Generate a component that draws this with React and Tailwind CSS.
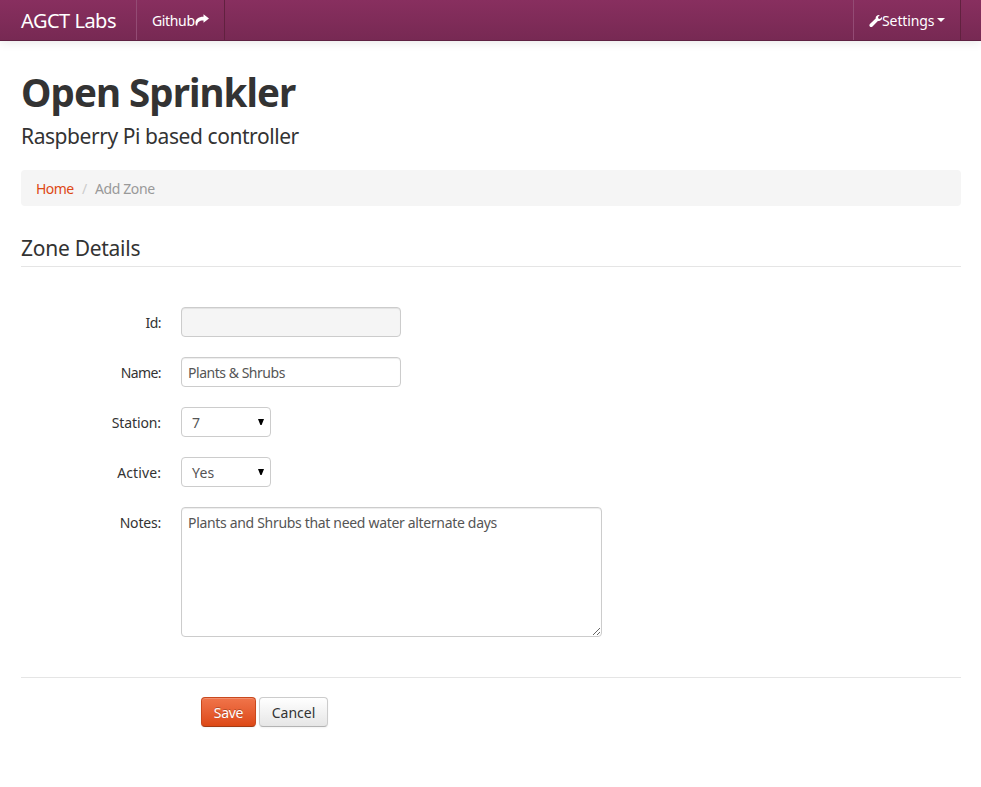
import React from "react";

const sans = "font-['Noto_Sans','Liberation_Sans',sans-serif]";
const field =
  "block rounded-[4px] border border-[#ccc] text-[14px] leading-[20px] text-[#555] outline-none";
const inset = "shadow-[inset_0_1px_1px_rgba(0,0,0,0.075)]";

function ShareIcon() {
  return (
    <svg width="14" height="14" viewBox="0 0 14 14" fill="#fff" className="mt-[2px] shrink-0">
      <path d="M8.5 1.2 L14 5.6 L8.5 9.8 V7.5 C4.8 7.3 2.4 8.6 2.2 12.6 H0.9 C-0.8 7.4 2.2 3.7 8.5 3.7 Z" />
    </svg>
  );
}

function WrenchIcon() {
  return (
    <svg width="14" height="14" viewBox="0 0 14 14" fill="#fff" className="mt-[3px] shrink-0">
      <path d="M12.9 3.1 L10.9 4.9 L9.3 4.5 L9 3 L10.9 1.1 C8.5 0.3 6.3 2.2 6.7 4.5 L0.9 9.9 C-0.7 11.8 1.6 14.1 3.5 12.5 L8.9 6.9 C11.3 7.4 13.7 5.5 12.9 3.1 Z" />
    </svg>
  );
}

function Row({ label, children, className = "mb-[20px]" }) {
  return (
    <div className={`flex items-start ${className}`}>
      <div className="w-[140px] pt-[6px] text-right leading-[20px]">{label}</div>
      <div className="ml-[20px]">{children}</div>
    </div>
  );
}

function Select({ value }) {
  return (
    <button
      type="button"
      className={`${field} flex h-[30px] w-[90px] items-center justify-between bg-white pl-[10px] pr-[6px]`}
    >
      <span className="pt-[1px] tracking-[0.2px]">{value}</span>
      <svg width="6" height="6" viewBox="0 0 6 6" fill="#000" className="mb-[1px]">
        <path d="M0 0H6L3.6 6H2.4Z" />
      </svg>
    </button>
  );
}

export default function App() {
  return (
    <div className={`min-h-[787px] bg-white text-[14px] leading-[20px] text-[#333] ${sans}`}>
      <nav className="flex h-[41px] border-b border-[#5f2142] bg-linear-to-b from-[#882f5f] to-[#772953] pl-[21px] pr-[20px] text-white shadow-[0_1px_10px_rgba(0,0,0,0.1)]">
        <a className="w-[115px] pt-[11px] text-[20px] leading-[20px]">
          <span className="tracking-[-0.5px]">AGCT Labs</span>
        </a>
        <a className="flex w-[89px] border-l border-r border-l-[#934b74] border-r-[#61213f] pl-[15px] pt-[11px]">
          <span className="w-[43px] whitespace-nowrap tracking-[-0.35px]">Github</span>
          <ShareIcon />
        </a>
        <a className="ml-auto flex w-[108px] border-l border-r border-l-[#934b74] border-r-[#61213f] pl-[15px] pt-[11px]">
          <WrenchIcon />
          <span className="-ml-px w-[54px] whitespace-nowrap tracking-[-0.1px]">Settings</span>
          <span className="ml-[1px] mt-[7px] h-0 w-0 border-x-4 border-t-4 border-x-transparent border-t-white" />
        </a>
      </nav>

      <main className="pl-[21px] pr-[20px]">
        <header className="pt-[31px]">
          <h1 className="h-[40px] text-[38.5px] font-bold leading-[40px] tracking-[-0.95px]">Open Sprinkler</h1>
          <p className="mt-[9px] h-[30px] text-[21px] leading-[30px] tracking-[-0.43px]">
            Raspberry Pi based controller
          </p>
        </header>

        <div className="mt-[19px] flex h-[36px] rounded-[4px] bg-[#f5f5f5] px-[15px] pt-[9px]">
          <a className="w-[37px] whitespace-nowrap tracking-[-0.6px] text-[#dd4814]">Home</a>
          <span className="ml-[9px] w-[13px] text-[#ccc]">/</span>
          <span className="whitespace-nowrap tracking-[-0.4px] text-[#999]">Add Zone</span>
        </div>

        <h2 className="mb-[40px] mt-[20px] h-[41px] border-b border-[#e5e5e5] pt-[2px] text-[21px] leading-[40px] tracking-[-0.27px]">
          Zone Details
        </h2>

        <form>
          <Row label={<span className="tracking-[-0.5px]">Id:</span>}>
            <input readOnly className={`${field} ${inset} h-[30px] w-[220px] bg-[#f5f5f5] px-[6px]`} />
          </Row>
          <Row label={<span className="tracking-[-0.6px]">Name:</span>}>
            <input
              defaultValue="Plants & Shrubs"
              className={`${field} ${inset} h-[30px] w-[220px] bg-white px-[6px] pt-[1px] tracking-[-0.47px]`}
            />
          </Row>
          <Row label={<span className="tracking-[-0.1px]">Station:</span>}>
            <Select value="7" />
          </Row>
          <Row label={<span className="tracking-[0.1px]">Active:</span>}>
            <Select value="Yes" />
          </Row>
          <Row label={<span className="tracking-[-0.2px]">Notes:</span>} className="">
            <textarea
              defaultValue="Plants and Shrubs that need water alternate days"
              className={`${field} ${inset} h-[130px] w-[421px] resize bg-white px-[6px] py-[5px] tracking-[-0.32px]`}
            />
          </Row>
          <div className="mt-[40px] flex gap-[3px] border-t border-[#e5e5e5] pl-[180px] pt-[19px]">
            <button
              type="button"
              className="h-[30px] w-[55px] rounded-[4px] border border-[#c9481d] border-b-[#a33a14] bg-linear-to-b from-[#f0744a] to-[#dd4814] pt-[2px] tracking-[-0.3px] text-white shadow-[inset_0_1px_0_rgba(255,255,255,0.2),0_1px_2px_rgba(0,0,0,0.05)] [text-shadow:0_-1px_0_rgba(0,0,0,0.25)]"
            >
              Save
            </button>
            <button
              type="button"
              className="h-[30px] w-[69px] rounded-[4px] border border-[#ccc] border-b-[#b3b3b3] bg-linear-to-b from-white to-[#e6e6e6] pt-[2px] shadow-[inset_0_1px_0_rgba(255,255,255,0.2),0_1px_2px_rgba(0,0,0,0.05)]"
            >
              Cancel
            </button>
          </div>
        </form>
      </main>
    </div>
  );
}
